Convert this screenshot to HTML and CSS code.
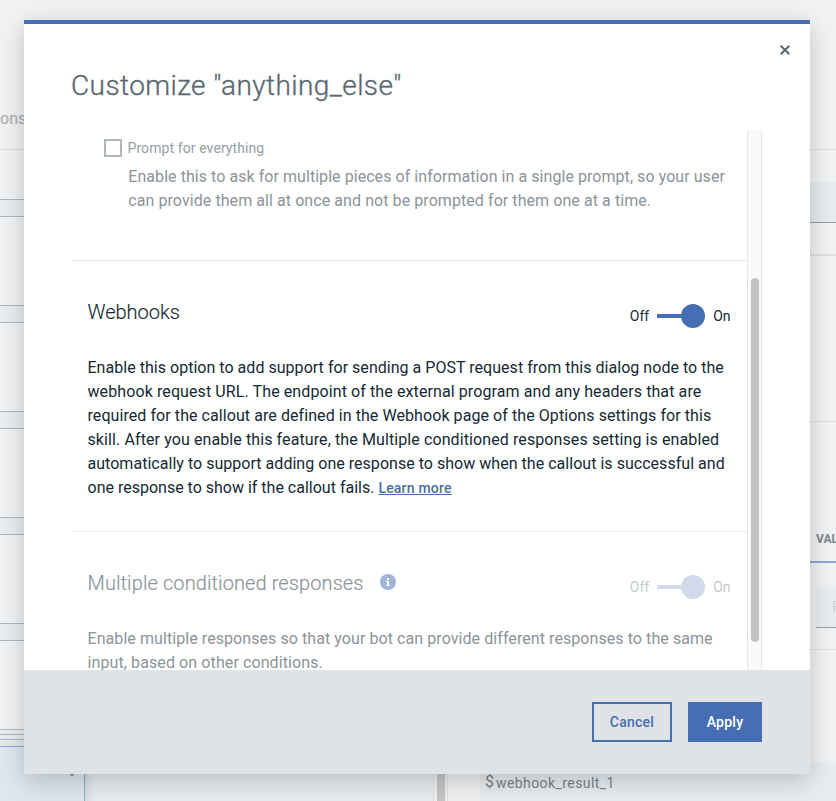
FILE: index.html
```html
<!DOCTYPE html>
<html lang="en">
<head>
<meta charset="utf-8">
<title>Customize node</title>
<link rel="stylesheet" href="styles.css">
</head>
<body>
<div class="workspace">
  <section class="tree">
    <div class="tree-tabs"><span class="tab-label">ons</span></div>
    <div class="nodes">
      <div class="node node-first"></div>
      <div class="node"></div>
      <div class="node"></div>
      <div class="node"></div>
      <div class="node"></div>
      <div class="node node-last"></div>
      <div class="stack-edge"></div>
      <div class="stack-edge"></div>
      <div class="node-selected"><span class="node-menu"></span></div>
    </div>
  </section>
  <div class="tree-scroll"><div class="tree-thumb"></div></div>
  <section class="editor">
    <div class="editor-head"></div>
    <div class="name-row"><div class="name-field"></div></div>
    <div class="condition-row"></div>
    <div class="context-head"><span class="column-label">VALUE</span></div>
    <div class="context-row"><div class="value-field">F</div></div>
    <div class="result-row"><div class="result-field"><span class="dollar">$</span><span class="result-name">webhook_result_1</span></div></div>
  </section>
</div>

<div class="modal" role="dialog">
  <header class="modal-head">
    <h1 class="modal-title">Customize "anything_else"</h1>
    <button class="close" aria-label="Close"><svg width="10" height="10" viewBox="0 0 10 10"><path d="M.7.7 9.3 9.3M9.3.7.7 9.3" stroke="#5a6872" stroke-width="2" fill="none"/></svg></button>
  </header>
  <div class="modal-body">
    <div class="settings">
      <section class="prompt-section">
        <label class="check-row"><span class="checkbox"></span><span class="check-label">Prompt for everything</span></label>
        <p class="hint"><span class="track-2">Enable this to ask for multiple pieces of information in a single prompt, so your user</span><br><span class="track-3">can provide them all at once and not be prompted for them one at a time.</span></p>
      </section>
      <section class="option">
        <div class="option-head">
          <h2 class="option-title">Webhooks</h2>
          <div class="toggle"><span>Off</span><span class="track"><span class="knob"></span></span><span>On</span></div>
        </div>
        <p class="copy"><span class="track-1">Enable this option to add support for sending a POST request from this dialog node to the</span><br><span class="track-4">webhook request URL. The endpoint of the external program and any headers that are</span><br><span class="track-3">required for the callout are defined in the Webhook page of the Options settings for this</span><br><span class="track-4">skill. After you enable this feature, the Multiple conditioned responses setting is enabled</span><br><span class="track-1">automatically to support adding one response to show when the callout is successful and</span><br><span>one response to show if the callout fails.</span> <a class="link">Learn more</a></p>
      </section>
      <section class="option option-disabled">
        <div class="option-head">
          <h2 class="option-title"><span class="track-4">Multiple conditioned responses</span><svg class="info" width="16" height="16" viewBox="0 0 16 16"><circle cx="8" cy="8" r="8" fill="#a0b3d9"/><path d="M7 4h2v2H7zM6 7h3v4h1v1H6v-1h1V8H6z" fill="#fff"/></svg></h2>
          <div class="toggle"><span>Off</span><span class="track"><span class="knob"></span></span><span>On</span></div>
        </div>
        <p class="copy"><span class="track-3">Enable multiple responses so that your bot can provide different responses to the same</span><br><span class="track-4">input, based on other conditions.</span></p>
      </section>
    </div>
    <div class="scrollbar"><div class="thumb"></div></div>
  </div>
  <footer class="modal-foot">
    <button class="btn btn-outline">Cancel</button>
    <button class="btn btn-solid">Apply</button>
  </footer>
</div>
</body>
</html>
```
FILE: styles.css
```css
* { box-sizing: border-box; }
body {
  margin: 0;
  width: 836px;
  height: 801px;
  overflow: hidden;
  position: relative;
  background: #eff1f3;
  font-family: Roboto, "Liberation Sans", sans-serif;
  color: #152934;
}
h1, h2, p { margin: 0; }
button { font-family: inherit; padding: 0; border: 0; background: none; }

.track-1 { letter-spacing: .03px; }
.track-2 { letter-spacing: .055px; }
.track-3 { letter-spacing: .072px; }
.track-4 { letter-spacing: .1px; }

.workspace { display: flex; height: 801px; overflow: hidden; }
.tree { flex: none; width: 433px; display: flex; flex-direction: column; background: #e8ecee; }
.tree-tabs { height: 150px; flex: none; background: #eff1f3; border-bottom: 1px solid #d9dcde; padding-top: 109px; }
.tab-label { font-size: 16px; line-height: 20px; color: #aeb1b3; -webkit-text-stroke: .2px; }
.nodes { display: flex; flex-direction: column; }
.node { height: 90px; margin-bottom: 16px; background: #f0f1f3; border: solid #adb7bd; border-width: 1px 0; flex: none; }
.node-first { height: 50px; border-top: 0; }
.node-last { margin-bottom: 4px; }
.stack-edge { height: 5px; border-bottom: 1px solid #adb7bd; }
.node-last + .stack-edge { height: 1px; }
.node-selected { margin-top: 6px; width: 85px; height: 80px; background: #dfe6ee; border: solid #8ea6d3; border-width: 1px 1px 0 0; box-shadow: 2px 2px 10px rgba(0, 0, 0, .1); padding: 25px 10px 0 0; display: flex; justify-content: flex-end; }
.node-menu { width: 4px; height: 4px; border-radius: 2px; background: #8c979e; }
.tree-scroll { flex: none; width: 15px; margin-top: 150px; background: #eff0f2; border: solid #e0e2e4; border-width: 0 1px; padding-left: 3px; }
.tree-thumb { width: 8px; height: 651px; background: #c4c6c8; }

.editor { flex: 1; min-width: 0; display: flex; flex-direction: column; background: #eff1f3; }
.editor > div { flex: none; }
.editor-head { height: 150px; border-bottom: 1px solid #dcdfe1; }
.name-row { height: 106px; padding-top: 32px; border-bottom: 2px solid #dfe2e4; }
.name-field { height: 41px; background: #e6ebee; border-bottom: 1px solid #95a1a9; }
.condition-row { height: 166px; border-bottom: 1px solid #dcdfe1; }
.context-head { height: 141px; padding: 109px 0 0 368px; border-bottom: 2px solid #8ea6d0; overflow: hidden; }
.column-label { display: block; font-size: 12px; font-weight: 700; line-height: 16px; color: #7d878d; }
.context-row { height: 87px; padding: 24px 0 0 368px; border-bottom: 1px solid #dcdfe1; overflow: hidden; }
.value-field { height: 41px; background: #e8ecee; border-bottom: 1px solid #95a1a9; padding: 12px 0 0 16px; font-size: 14px; line-height: 16px; color: #ccd2d6; }
.result-row { padding: 113px 0 0 32px; }
.result-field { height: 60px; background: #e8ecef; padding: 10px 0 0 5px; display: flex; color: #78838a; white-space: nowrap; }
.dollar { font-size: 16px; line-height: 18px; width: 11px; }
.result-name { font-size: 14px; line-height: 20px; letter-spacing: .42px; }

/* Covers the workspace behind it */
.modal {
  position: absolute;
  left: 24px;
  top: 20px;
  width: 786px;
  height: 754px;
  display: flex;
  flex-direction: column;
  background: #fff;
  border-top: 4px solid #466eb2;
  box-shadow: 0 12px 24px rgba(0, 0, 0, .1), 0 2px 20px rgba(0, 0, 0, .1);
}
.modal-head { height: 106px; padding: 42px 20px 0 47px; display: flex; justify-content: space-between; }
.modal-title { font-size: 28px; font-weight: 300; line-height: 40px; letter-spacing: .42px; color: #5a6872; -webkit-text-stroke: .35px; }
.close { width: 10px; height: 10px; margin-top: -21px; }
.close svg { display: block; }
.modal-body { height: 540px; margin: 0 48px; display: flex; overflow: hidden; }
.settings { width: 675px; overflow: hidden; }
.prompt-section { height: 131px; padding: 8px 0 0 32px; border-bottom: 1px solid #dfe3e6; }
.check-row { display: flex; align-items: center; height: 20px; }
.checkbox { width: 18px; height: 18px; border: 2px solid #adb5ba; margin-right: 5.5px; }
.check-label { font-size: 14px; line-height: 20px; letter-spacing: .09px; color: #959fa5; }
.hint { padding: 7px 0 0 24.3px; font-size: 16px; line-height: 24px; color: #8a949a; white-space: nowrap; }
.option { height: 271px; padding: 36px 0 0 15.5px; border-bottom: 1px solid #ebedef; }
.option-head { height: 59px; padding-right: 16.5px; display: flex; justify-content: space-between; }
.option-title { height: 30px; font-size: 20px; font-weight: 300; line-height: 30px; display: flex; align-items: center; -webkit-text-stroke: .15px; }
.info { margin: -2px 0 0 16.5px; }
.toggle { display: flex; align-items: center; height: 24px; margin-top: 7px; font-size: 14px; line-height: 20px; }
.track { width: 48px; height: 24px; margin: 0 8px; display: flex; align-items: center; justify-content: flex-end; background: linear-gradient(#466eb2, #466eb2) 0 50% / 30px 4px no-repeat; }
.knob { width: 24px; height: 24px; border-radius: 50%; background: #466eb2; }
.copy { font-size: 16px; line-height: 24px; white-space: nowrap; }
.link { font-size: 14px; font-weight: 500; letter-spacing: .2px; color: #466eb2; text-decoration: underline; }
.option-disabled { border-bottom: 0; color: #8a949a; }
.option-disabled .toggle { color: #c4cacd; }
.option-disabled .track { background-image: linear-gradient(#d2dbec, #d2dbec); }
.option-disabled .knob { background: #d2dbec; }
.scrollbar { width: 15px; background: #fafafa; border: solid #e8e8e8; border-width: 0 1px; padding: 148px 0 0 3px; }
.thumb { width: 8px; height: 364px; border-radius: 4px; background: #c2c2c2; }
.modal-foot { height: 104px; padding: 0 48px; display: flex; align-items: center; justify-content: flex-end; gap: 16px; background: #dfe3e5; }
.btn { height: 40px; font-size: 14px; font-weight: 500; letter-spacing: .25px; }
.btn-outline { width: 80px; border: 2px solid #466eb2; color: #466eb2; }
.btn-solid { width: 74px; background: #466eb2; color: #fff; }
```
